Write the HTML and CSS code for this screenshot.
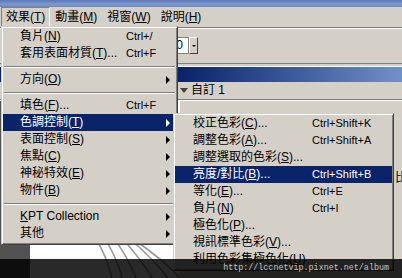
FILE: index.html
```html
<!DOCTYPE html>
<html lang="zh-Hant">
<head>
  <meta charset="UTF-8">
  <title>效果選單 - 色調控制</title>
  <link rel="stylesheet" href="styles.css">
</head>
<body>
  <div class="screen">
    <div class="titlebar"></div>

    <div class="menubar">
      <span class="mb-item active">效果(<u>T</u>)</span>
      <span class="mb-item">動畫(<u>M</u>)</span>
      <span class="mb-item">視窗(<u>W</u>)</span>
      <span class="mb-item">說明(<u>H</u>)</span>
    </div>

    <div class="toolbar">
      <div class="spin">
        <span class="spin-field">10</span>
        <span class="spin-btn"><span class="down"></span></span>
      </div>
    </div>

    <div class="panel-head"></div>
    <div class="preset-row"><span class="tri"></span>自訂 1</div>

    <div class="workspace">
      <div class="ws-side"></div>
      <div class="ws-canvas">
        <svg width="150" height="177" viewBox="0 0 150 177">
          <g fill="none" stroke="#9a9a9a" stroke-width="1.6">
            <path d="M62 130 C72 148 78 160 82 177"/>
            <path d="M70 128 C80 146 88 160 92 177"/>
            <path d="M78 128 C90 146 100 160 106 177"/>
            <path d="M86 130 C102 148 114 162 122 177"/>
            <path d="M96 134 C114 150 128 164 138 177"/>
            <path d="M106 140 C126 154 140 166 150 177"/>
          </g>
        </svg>
      </div>
      <div class="ws-panel"><span class="ws-char">比</span></div>
    </div>

    <!-- 效果 menu -->
    <ul class="menu menu-main">
      <li class="mi"><span>負片(<u>N</u>)</span><span class="key">Ctrl+/</span></li>
      <li class="mi"><span>套用表面材質(<u>T</u>)...</span><span class="key">Ctrl+F</span></li>
      <li class="sep"></li>
      <li class="mi"><span>方向(<u>O</u>)</span><span></span><span class="arr"></span></li>
      <li class="sep"></li>
      <li class="mi"><span>填色(<u>F</u>)...</span><span class="key">Ctrl+F</span></li>
      <li class="mi hot"><span>色調控制(<u>T</u>)</span><span></span><span class="arr"></span></li>
      <li class="mi"><span>表面控制(<u>S</u>)</span><span></span><span class="arr"></span></li>
      <li class="mi"><span>焦點(<u>C</u>)</span><span></span><span class="arr"></span></li>
      <li class="mi"><span>神秘特效(<u>E</u>)</span><span></span><span class="arr"></span></li>
      <li class="mi"><span>物件(<u>B</u>)</span><span></span><span class="arr"></span></li>
      <li class="sep"></li>
      <li class="mi"><span><u>K</u>PT Collection</span><span></span><span class="arr"></span></li>
      <li class="mi"><span>其他</span><span></span><span class="arr"></span></li>
    </ul>

    <!-- 色調控制 submenu -->
    <ul class="menu menu-sub">
      <li class="mi"><span>校正色彩(<u>C</u>)...</span><span class="key">Ctrl+Shift+K</span></li>
      <li class="mi"><span>調整色彩(<u>A</u>)...</span><span class="key">Ctrl+Shift+A</span></li>
      <li class="mi"><span>調整選取的色彩(<u>S</u>)...</span><span></span></li>
      <li class="mi hot"><span>亮度/對比(<u>B</u>)...</span><span class="key">Ctrl+Shift+B</span></li>
      <li class="mi"><span>等化(<u>E</u>)...</span><span class="key">Ctrl+E</span></li>
      <li class="mi"><span>負片(<u>N</u>)</span><span class="key">Ctrl+I</span></li>
      <li class="mi"><span>極色化(<u>P</u>)...</span><span></span></li>
      <li class="mi"><span>視訊標準色彩(<u>V</u>)...</span><span></span></li>
      <li class="mi"><span>利用色彩集極色化(<u>U</u>)</span><span></span></li>
    </ul>

    <div class="watermark">http://lccnetvip.pixnet.net/album</div>
  </div>
</body>
</html>
```

FILE: styles.css
```css
body {
  margin: 0;
  overflow: hidden;
  font-family: 'Liberation Sans', 'Noto Sans CJK TC', sans-serif;
  font-size: 12px;
  color: #000;
  background-color: #d4d0c8;
}

.screen {
  position: relative;
  width: 402px;
  height: 278px;
  overflow: hidden;
  background-color: #d4d0c8;
  display: flex;
  flex-direction: column;
}

u {
  text-decoration: underline;
  text-underline-offset: 1px;
}

.titlebar {
  height: 7px;
  background: linear-gradient(to bottom, #5b78b8, #7d98cc 60%, #6a86c2);
}

/* menu bar */
.menubar {
  height: 20px;
  display: flex;
  align-items: center;
  padding-left: 1px;
}

.mb-item {
  height: 18px;
  line-height: 18px;
  padding: 0 4px;
  border: 1px solid transparent;
  white-space: nowrap;
}

.mb-item.active {
  border-color: #808080 #fff #fff #808080;
}

/* toolbar */
.toolbar {
  height: 36px;
  border-top: 1px solid #808080;
  border-bottom: 1px solid #808080;
  box-shadow: inset 0 1px 0 #fff;
  display: flex;
  align-items: center;
}

.spin {
  display: flex;
  margin-left: 157px;
}

.spin-field {
  width: 25px;
  height: 15px;
  line-height: 15px;
  background-color: #fff;
  border: 1px solid #808080;
  text-align: right;
  padding-right: 5px;
}

.spin-btn {
  width: 7px;
  height: 15px;
  border: 1px solid;
  border-color: #fff #404040 #404040 #fff;
  display: flex;
  align-items: center;
  justify-content: center;
}

.down {
  width: 0;
  height: 0;
  border-left: 2px solid transparent;
  border-right: 2px solid transparent;
  border-top: 2px solid #000;
}

.panel-head {
  height: 15px;
  margin-top: 2px;
  border-top: 1px solid #fff;
  background: linear-gradient(to right, #0a246a 45%, #3f5f9e 75%, #7290c8);
}

.preset-row {
  height: 17px;
  line-height: 17px;
  border-bottom: 1px solid #808080;
  padding-left: 180px;
  display: flex;
  align-items: center;
}

.tri {
  width: 0;
  height: 0;
  border-left: 4px solid transparent;
  border-right: 4px solid transparent;
  border-top: 5px solid #404040;
  margin-right: 3px;
}

.workspace {
  flex: 1;
  display: flex;
  border-top: 1px solid #fff;
}

.ws-side {
  width: 30px;
  background-color: #525252;
}

.ws-canvas {
  width: 150px;
  background-color: #fff;
}

.ws-canvas svg {
  display: block;
}

.ws-panel {
  flex: 1;
  display: flex;
  justify-content: flex-end;
  align-items: flex-start;
  padding-top: 67px;
}

.ws-char {
  width: 7px;
  overflow: hidden;
  white-space: nowrap;
}

/* drop-down menus */
.menu {
  position: absolute;
  margin: 0;
  padding: 0;
  list-style: none;
  background-color: #d4d0c8;
  border: 1px solid;
  border-color: #d4d0c8 #404040 #404040 #d4d0c8;
  box-shadow: inset 1px 1px 0 #fff, inset -1px -1px 0 #808080;
}

.menu-main {
  left: 1px;
  top: 26px;
  width: 173px;
  padding: 1px 1px 2px;
}

.menu-sub {
  left: 173px;
  top: 113px;
  width: 217px;
  padding: 1px 1px 2px;
}

.mi {
  display: grid;
  align-items: center;
  height: 17px;
  line-height: 17px;
  white-space: nowrap;
}

.menu-main .mi {
  grid-template-columns: 106px 40px 1fr;
  padding-left: 17px;
  padding-right: 6px;
}

.menu-sub .mi {
  grid-template-columns: 119px 1fr;
  padding-left: 18px;
}

.key {
  font-size: 11px;
}

.mi.hot {
  background-color: #0a246a;
  color: #fff;
}

.arr {
  justify-self: end;
  width: 0;
  height: 0;
  border-top: 4px solid transparent;
  border-bottom: 4px solid transparent;
  border-left: 4px solid #000;
}

.mi.hot .arr {
  border-left-color: #fff;
}

.sep {
  height: 9px;
  display: flex;
  align-items: center;
  padding: 0 1px;
}

.sep::before {
  content: '';
  flex: 1;
  border-top: 1px solid #808080;
  border-bottom: 1px solid #fff;
}

.watermark {
  position: absolute;
  left: 0;
  top: 259px;
  width: 402px;
  height: 19px;
  box-sizing: border-box;
  padding-right: 13px;
  background-color: rgba(0, 0, 0, 0.84);
  color: #c4c4c4;
  font-family: 'Liberation Mono', monospace;
  font-size: 8.4px;
  line-height: 19px;
  text-align: right;
}
```
